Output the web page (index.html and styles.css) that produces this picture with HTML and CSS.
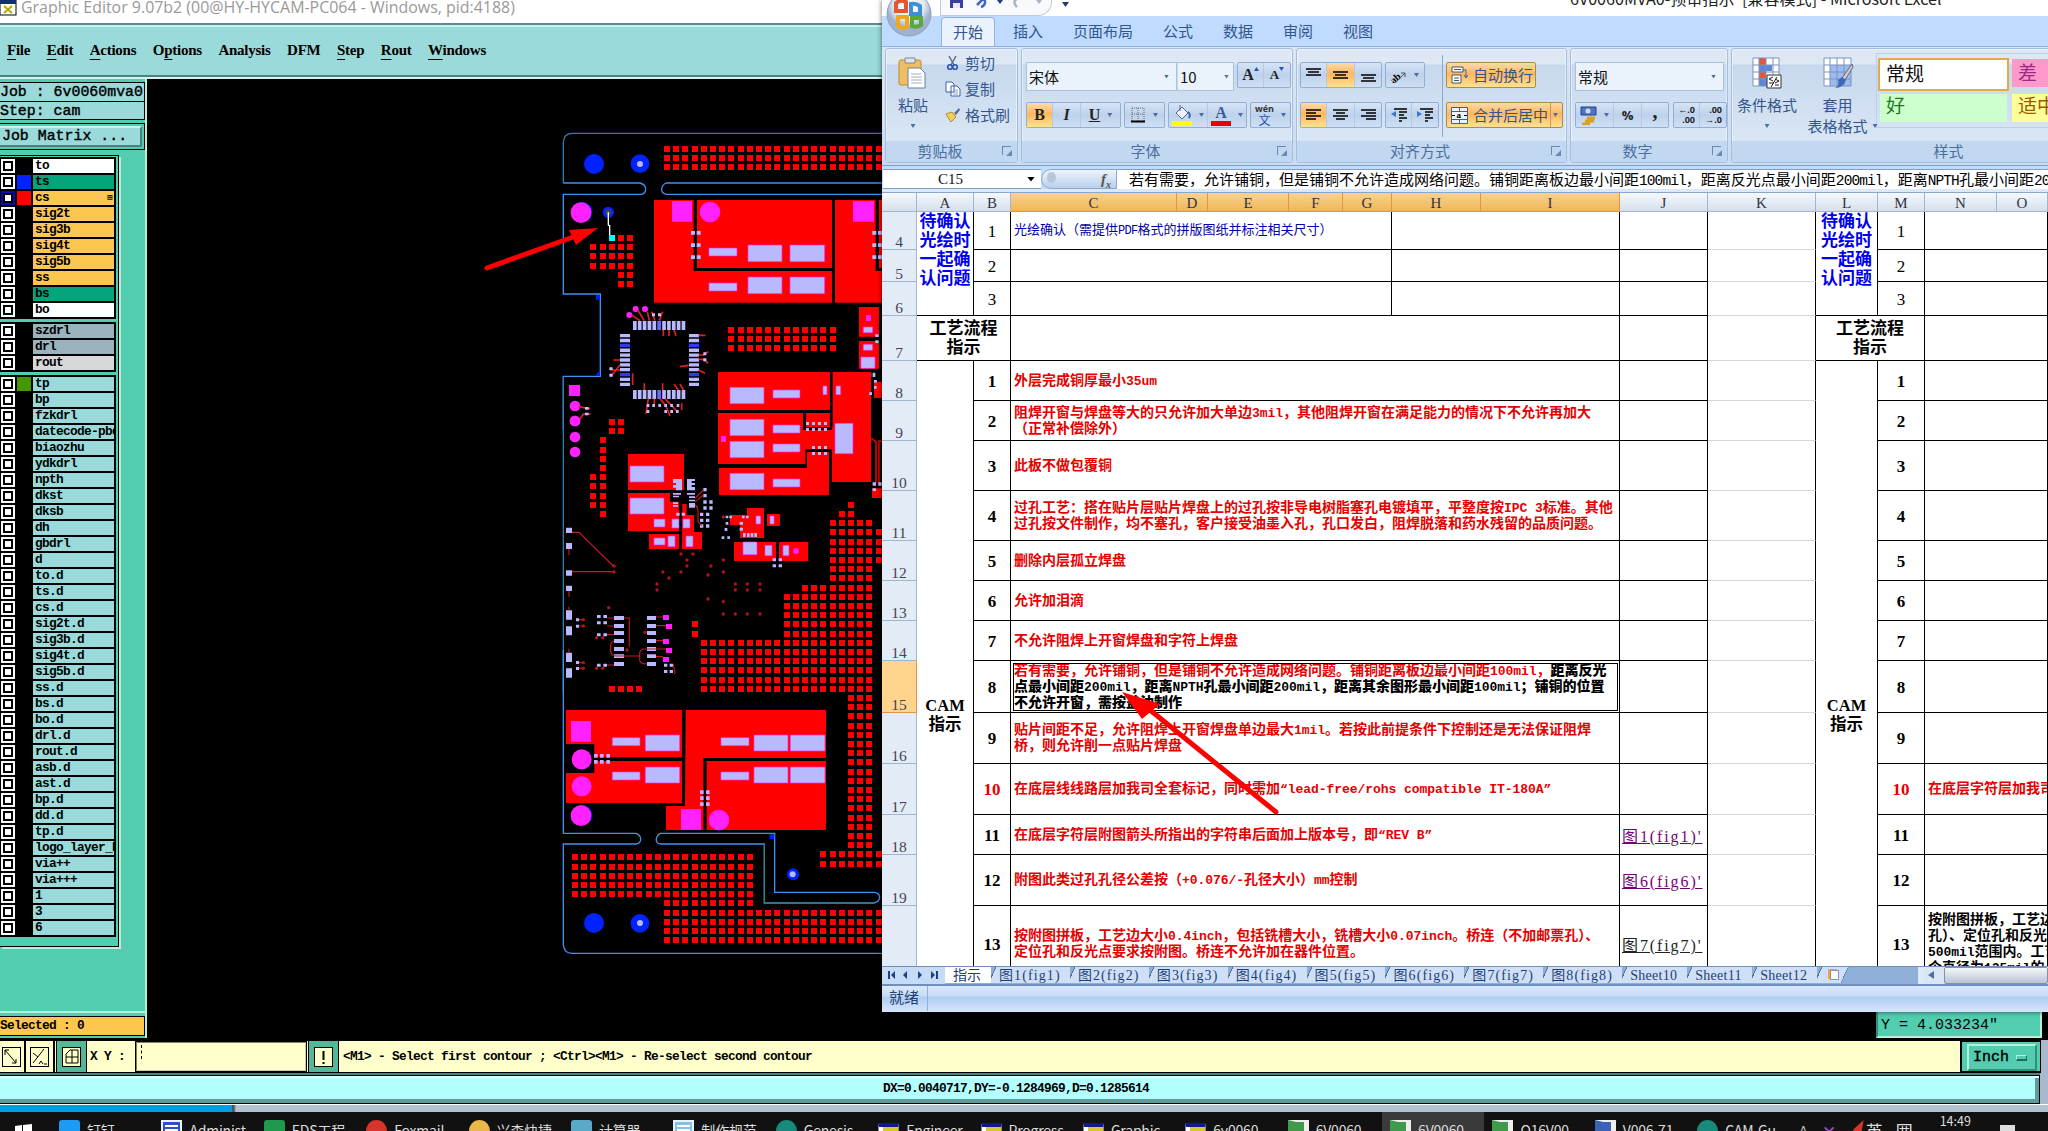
FILE: index.html
```html
<!DOCTYPE html>
<html lang="zh-CN">
<head>
<meta charset="UTF-8">
<title>Graphic Editor</title>
<link rel="stylesheet" href="styles.css">
</head>
<body>
<div class="editor">
  <div class="editor-title">
    <svg width="17" height="16" viewBox="0 0 17 16"><rect x="0" y="0" width="16" height="15" fill="#fff" stroke="#000"/><rect x="0" y="0" width="16" height="4" fill="#123078"/><path d="M4 6l8 7M12 6l-8 7" stroke="#b9a800" stroke-width="2"/></svg>
    <span>Graphic Editor 9.07b2 (00@HY-HYCAM-PC064 - Windows, pid:4188)</span>
  </div>
  <div class="menubar">
    <span><u>F</u>ile</span><span><u>E</u>dit</span><span><u>A</u>ctions</span><span>O<u>p</u>tions</span><span>Analysis</span><span>DFM</span><span><u>S</u>tep</span><span><u>R</u>out</span><span><u>W</u>indows</span>
  </div>
  <div class="work">
    <div class="side">
      <div class="job">
        <div class="job-line">Job : 6v0060mva0</div>
        <div class="job-line">Step: cam</div>
      </div>
      <div class="matrix"><div class="matrix-btn">Job Matrix ...</div></div>
      <div class="layers" id="layers"></div>
      <div class="fill"></div>
      <div class="selected">Selected : 0</div>
    </div>
    <div class="canvas">
      <svg class="board" width="735" height="961" viewBox="147 79 735 961">
        <g id="copper" fill="#f00"></g>
        <!-- upper part -->
        <g transform="translate(540 110) scale(.3333)">
          <g fill="none" stroke="#3f93f0" stroke-width="4">
            <path d="M70 219V98Q70 70 98 70H1026" stroke="#2d7fae"/>
            <path d="M70 219H300Q317 224 317 237T305 253H70V552H181V799H70V960"/>
            <path d="M1026 219H378Q366 225 365 237T378 253H1026"/>
          </g>
          <path d="M168 555h12v14h-12zM166 797h14v-18z" fill="#02f"/>
          <g fill="#02f"><circle cx="162" cy="162" r="30"/><circle cx="300" cy="161" r="28"/><circle cx="205" cy="307" r="17"/><circle cx="127" cy="306" r="30"/></g>
          <circle cx="300" cy="162" r="9" fill="#b9b9ff"/>
          <circle cx="205" cy="307" r="9" fill="#444"/>
          <path d="M205 307V345L209 347V380" fill="none" stroke="#fff" stroke-width="4"/>
          <rect x="207" y="375" width="18" height="18" fill="#0ff"/>
          <g fill="#f00">
            <path d="M342 270H461V483H876V578H342zM471 270H876V474H471zM885 270H1007V483H1026V578H885zM1017 270h10v204h-10z"/>
            <path d="M957 591H1017V680H957zM957 693H1017V776H957z"/>
            <path d="M1003 820h24v44h-24z"/>
          </g>
          <g fill="#f2f"><circle cx="123" cy="308" r="31"/><path d="M396 273h60v62h-60zM939 273h63v62h-63zM978 615h15v18h-15z"/><circle cx="510" cy="306" r="31"/>
            <circle cx="287" cy="597" r="9"/><circle cx="315" cy="597" r="9"/><circle cx="268" cy="615" r="9"/>
            <path d="M87 825h33v33H87z"/><circle cx="105" cy="888" r="16"/><circle cx="105" cy="933" r="16"/></g>
          <g fill="#b9b9ff" stroke="#f2f" stroke-width="2">
            <path d="M507 414h84v24h-84zM624 405h102v50H624zM750 405h104v50H750zM507 519h84v24h-84zM624 501h102v50H624zM750 501h104v50H750z"/>
            <path d="M970 651h28v17h-28zM970 703h28v18h-28zM963 741h42v34h-42z"/>
          </g>
          <g fill="#b9b9ff">
            <path d="M453 363h12v11h-12zM470 363h12v11h-12zM453 400h12v11h-12zM470 400h12v11h-12zM453 436h12v11h-12zM470 436h12v11h-12zM997 363h12v11h-12zM1014 363h12v11h-12zM997 400h12v11h-12zM1014 400h12v11h-12zM997 436h12v11h-12zM1014 436h12v11h-12z"/>
            <path d="M963 788h8v13h-8zM975 788h8v13h-8zM986 788h8v13h-8zM998 788h8v13h-8zM1006 673h10v8h-10zM1006 691h10v8h-10zM1002 810h8v8h-8zM1002 828h8v8h-8zM988 847h8v8h-8z"/>
          </g>
          <g id="qfp"></g>
          <g fill="none" stroke="#d22" stroke-width="5">
            <path d="M275 615L300 632M293 600L313 632M322 605L328 632M335 605L345 632M368 605L358 632M370 660V678M387 660V678M402 660L408 678M476 676H496M476 735H490L505 725M476 748H490L505 760M476 780L495 790M240 750H220M240 765L212 800M240 780H215M278 790V825M420 770L446 766M313 820V840M368 820V840M402 822L415 840M420 822L430 840M325 866L318 912M343 866V885M360 866L378 888L390 918M375 866L398 890L412 905M425 880V900"/>
            <path d="M115 890L150 896M118 930L130 912H152"/>
          </g>
          <g fill="#c9b9ff"><path d="M336 610h9v9h-9zM354 610h9v9h-9zM490 727h9v9h-9zM490 745h9v9h-9zM208 772h10v9h-10zM208 791h10v9h-10zM320 882h8v9h-8zM337 882h8v9h-8zM355 882h8v9h-8zM373 882h8v9h-8zM391 882h8v9h-8zM410 882h8v9h-8zM320 900h8v9h-8zM373 900h8v9h-8zM391 900h8v9h-8zM408 900h8v9h-8zM135 891h11v8h-11zM135 908h11v8h-11z"/></g>
        </g>
        <!-- middle part -->
        <g transform="translate(540 360) scale(.3333)">
          <path d="M70 50V1000" stroke="#2d7fae" stroke-width="4"/>
          <g fill="#f00">
            <path d="M534 36H870V202H798V150H534zM534 159H789V210H876V36H993V366H876V268H796V312H534zM537 324H801V276H867V405H537z"/>
            <path d="M264 282H432V390H264zM264 399H390V425H417V514H264zM427 432H440V465H462V516H486V567H426zM327 522H417V567H327z"/>
            <path d="M621 444H672V534H600V495H570V465H621zM681 462H720V498H681zM582 546H708V603H582zM717 546H804V603H717z"/>
            <path d="M996 385H1026V414H996zM1002 65h24v48h-24z"/>
          </g>
          <path d="M870 36h8v166h-8zM789 150h81v9h-75v40h-6z" fill="#000"/>
          <path d="M994 235L1008 245V370M1026 243H1017V370" fill="none" stroke="#d00" stroke-width="5"/>
          <g fill="#f2f"><circle cx="105" cy="231" r="16"/><circle cx="105" cy="276" r="16"/><circle cx="105" cy="183" r="16"/><circle cx="768" cy="573" r="9"/>
            <path d="M543 228h15v18h-15zM369 765h18v15h-18zM378 792h18v15h-18zM369 837h18v15h-18zM378 864h18v15h-18zM369 891h18v15h-18z"/></g>
          <g fill="#b9b9ff" stroke="#f2f" stroke-width="2">
            <path d="M570 82h102v49H570zM570 178h102v49H570zM570 244h102v49H570zM570 340h102v49H570zM699 90h81v24h-81zM699 195h81v24h-81zM699 252h81v24h-81zM699 357h81v24h-81zM849 78h12v26h-12zM888 78h14v26h-14zM885 190h54v91h-54z"/>
            <path d="M270 318h102v48H270zM270 414h102v48H270zM342 477h33v24h-33zM396 477h21v27h-21zM429 477h21v27h-21zM342 534h33v21h-33zM384 528h21v32h-21zM438 528h21v32h-21z"/>
            <path d="M648 468h14v24h-14zM690 468h12v24h-12zM609 546h42v38h-42zM675 556h21v31h-21zM729 556h18v31h-18z"/>
          </g>
          <g fill="#b9b9ff">
            <path d="M798 186h9v9h-9zM816 186h9v9h-9zM834 186h9v9h-9zM852 186h9v9h-9zM798 204h9v9h-9zM816 204h9v9h-9zM834 204h9v9h-9zM852 204h9v9h-9zM816 258h9v9h-9zM834 258h9v9h-9zM852 258h9v9h-9zM816 276h9v9h-9zM834 276h9v9h-9zM852 276h9v9h-9z"/>
            <path d="M399 357h27v34h-18v-8h-9v-8h9v-6h-9zM441 357h24v6h-10v6h10v6h-10v6h10v10h-24zM399 399h24v5h-24zM399 407h18v5h-18zM399 427h15v5h-15zM399 435h15v5h-15zM441 399h24v5h-24zM447 409h18v5h-18zM447 419h18v5h-18zM447 429h18v14h-18z"/>
            <path d="M490 384h10v10h-10zM490 402h10v10h-10zM490 421h10v10h-10zM508 421h10v10h-10zM490 439h10v10h-10zM508 439h10v10h-10zM480 458h10v10h-10zM498 458h10v10h-10zM480 476h10v10h-10zM498 476h10v10h-10zM480 493h10v10h-10zM498 493h10v10h-10zM409 458h10v9h-10zM425 458h10v9h-10z"/>
            <path d="M557 467h8v8h-8zM568 467h8v8h-8zM606 467h8v8h-8zM618 467h8v8h-8zM557 486h8v8h-8zM599 486h10v8h-10zM554 504h8v9h-8zM599 503h10v9h-10zM545 529h8v8h-8zM562 529h8v8h-8zM609 519h8v12h-8zM621 519h8v12h-8zM632 519h8v12h-8zM643 519h8v12h-8zM698 595h10v9h-10zM716 595h10v9h-10zM698 613h10v9h-10zM716 613h10v9h-10zM998 367h10v10h-10zM1015 367h10v10h-10zM998 385h10v8h-10zM1002 60h8v8h-8zM1002 78h8v8h-8zM988 97h8v8h-8z"/>
            <path d="M78 503h18v16H78zM78 549h18v18H78zM78 631h18v16H78zM78 677h18v16H78zM78 751h18v28H78zM78 799h18v27H78zM78 878h18v28H78zM78 925h18v28H78z"/>
            <path d="M222 768h30v12h-30zM222 792h30v12h-30zM222 813h30v12h-30zM222 837h30v12h-30zM222 861h30v12h-30zM222 883h30v11h-30zM222 906h30v12h-30zM321 768h27v12h-27zM321 792h27v12h-27zM321 813h27v12h-27zM321 837h27v12h-27zM321 861h27v12h-27zM321 883h27v11h-27zM321 906h27v12h-27z"/>
            <path d="M171 765h11v9h-11zM190 765h11v9h-11zM171 784h11v9h-11zM190 784h11v9h-11zM171 820h11v9h-11zM190 820h11v9h-11zM171 911h11v9h-11zM190 911h11v9h-11zM108 775h9v9h-9zM108 794h9v9h-9zM108 903h9v9h-9zM108 921h9v9h-9zM372 911h10v9h-10zM389 911h10v9h-10zM372 930h10v9h-10zM389 930h10v9h-10z"/>
          </g>
          <g fill="none" stroke="#c21b1b" stroke-width="3.500">
            <path d="M96 517H117L220 618M96 635H222M252 774H268V860M222 843Q212 845 212 858V876Q214 888 228 888H299M348 867H310Q299 870 299 880V900Q300 912 321 912M87 567V585M87 693V711M87 740V751M87 866V878M117 779H135M117 798H135M117 908H135M117 925H135M201 774H222M201 798H222M201 824H222M201 915H222M348 771H369M348 797H378M348 842H369M348 867H378M348 890H369M465 415L490 390M465 425L490 405M465 435Q475 440 474 460V485L485 497M400 912L405 942"/>
          </g>
          <g id="vias" fill="#b01414"></g>
        </g>
        <!-- lower part -->
        <g transform="translate(540 670) scale(.3333)">
          <g fill="#f00">
            <path d="M78 120H426V262H163V222H78zM78 309H163V273H426V399H78z"/>
            <path d="M437 120H858V264H490V480H378V408H435zM500 273H858V480H500z"/>
          </g>
          <g fill="none" stroke="#3f93f0" stroke-width="4">
            <path d="M70 -60V490H288Q302 495 302 508T288 522H70V825Q73 850 96 850H1026" />
            <path d="M704 490H362Q350 495 349 508T362 522H673V699H1003Q1019 695 1019 682T1003 667H704z"/>
          </g>
          <path d="M673 522V699H1003" fill="none" stroke="#2f7d6a" stroke-width="3"/>
          <g fill="#02f"><circle cx="162" cy="759" r="30"/><circle cx="300" cy="760" r="28"/><circle cx="759" cy="613" r="18"/><circle cx="127" cy="435" r="30"/><path d="M689 493h14v14h-14z"/></g>
          <g fill="#b9b9ff"><circle cx="300" cy="759" r="9"/><circle cx="758" cy="613" r="9"/></g>
          <g fill="#f2f"><path d="M93 153h60v62H93zM423 417h60v62h-60z"/><circle cx="125" cy="268" r="30"/><circle cx="125" cy="349" r="30"/><circle cx="123" cy="437" r="31"/><circle cx="537" cy="450" r="31"/></g>
          <g fill="#b9b9ff" stroke="#f2f" stroke-width="2">
            <path d="M217 203h83v24h-83zM316 195h103v48H316zM217 306h83v24h-83zM316 291h103v48H316zM543 203h84v24h-84zM642 195h102v48H642zM751 195h104v48H751zM543 306h84v24h-84zM642 291h102v48H642zM751 291h104v48H751z"/>
          </g>
          <path fill="#c9a9ff" d="M162 252h11v11h-11zM180 252h11v11h-11zM199 252h11v11h-11zM162 270h11v11h-11zM180 270h11v11h-11zM199 270h11v11h-11zM480 361h11v11h-11zM498 361h11v11h-11zM480 379h11v11h-11zM498 379h11v11h-11zM480 397h11v11h-11zM498 397h11v11h-11z"/>
        </g>
        <path d="M487 268L576 236" stroke="#f00" stroke-width="5" stroke-linecap="round"/>
        <path d="M598 228L569 230L576 245z" fill="#f00"/>
      </svg>
      <div class="readout"><div>X = -0.168968</div><div>Y = 4.033234"</div></div>
    </div>
  </div>
  <div class="cmdbar">
    <div class="tool"><svg width="20" height="24" viewBox="0 0 20 24"><rect x=".5" y="2.5" width="18" height="19"/><path d="M3 5L14 18M3 10V5h4M10 18h4v-4"/></svg></div>
    <div class="tool"><svg width="20" height="24" viewBox="0 0 20 24"><rect x=".5" y="2.5" width="18" height="19"/><path d="M3 18L14 4M3 8L8 12M9 19L11 16L13 19M14 19h3"/></svg></div>
    <div class="tool on"><svg width="20" height="24" viewBox="0 0 20 24"><rect x=".5" y="2.5" width="18" height="19"/><path d="M4 9L8 5H16V18H4zM4 12H16M10 5V18"/></svg></div>
    <span class="xy">X Y :</span>
    <div class="xy-input"><i></i></div>
    <div class="tool on"><svg width="20" height="24" viewBox="0 0 20 24"><rect x=".5" y="2.5" width="18" height="19"/><path d="M9.5 6V15M9.5 17V19" stroke-width="2"/></svg></div>
    <span class="hint">&lt;M1&gt; - Select first contour ; &lt;Ctrl&gt;&lt;M1&gt; - Re-select second contour</span>
    <div class="inch"><div>Inch<i></i></div></div>
  </div>
  <div class="measure"><span>DX=0.0040717,DY=-0.1284969,D=0.1285614</span></div>
  <div class="strip"></div>
</div>

<div class="taskbar" id="taskbar"></div>

<div class="excel">
  <div class="xl-title">
    <div class="qat">
      <svg width="110" height="14" viewBox="0 0 110 14"><path d="M9-4h13v12H9z" fill="#3a3fa0"/><path d="M12 3h7v5h-7z" fill="#e8e8ff"/><path d="M36 5L43-2Q46 5 40 7" fill="none" stroke="#3b66c4" stroke-width="2.5"/><path d="M56 0h6l-3 4z" fill="#1d3d80"/><path d="M78-3Q70 2 76 7" fill="none" stroke="#a9b3c4" stroke-width="2.5"/><path d="M95 0h6l-3 4z" fill="#a9b3c4"/></svg>
    </div>
    <span class="qat-more"></span>
    <span class="xl-name">6V0060MVA0-预审指示&nbsp; [兼容模式] - Microsoft Excel</span>
  </div>
  <div class="orb"><svg width="46" height="46" viewBox="0 0 46 46"><defs><radialGradient id="orb" cy=".3"><stop offset="0" stop-color="#fff"/><stop offset=".7" stop-color="#e3e8f0"/><stop offset="1" stop-color="#9fb2cd"/></radialGradient></defs><circle cx="23" cy="16" r="22" fill="url(#orb)" stroke="#8ba0c2"/><g fill="none" stroke-width="4"><path d="M10 5q5-4 10-1v9h-10z" stroke="#e4572e"/><path d="M25 6q5-1 9 2v8h-9z" stroke="#3c8fd6"/><path d="M12 19h9v10q-5 2-9-1z" stroke="#f2a71b"/><path d="M26 20h9v7q-5 3-9 1z" stroke="#5aa83a"/></g></svg></div>
  <div class="tabs">
    <span class="active">开始</span><span>插入</span><span>页面布局</span><span>公式</span><span>数据</span><span>审阅</span><span>视图</span>
  </div>
  <div class="ribbon">
    <div class="group g-clip">
      <div class="body">
        <div class="big">
          <svg width="32" height="34" viewBox="0 0 32 34"><rect x="2" y="4" width="22" height="25" rx="2" fill="#f0be62" stroke="#c08a30"/><path d="M8 2h10v5H8z" fill="#dfe4ea" stroke="#7d8896"/><path d="M11 12h12l5 5v15H11z" fill="#fff" stroke="#6b7f9e"/><path d="M14 18h10M14 21h11M14 24h11M14 27h11" stroke="#9fb0c8"/></svg>
          <span>粘贴</span><i class="dn"></i>
        </div>
        <div class="list">
          <div><svg width="16" height="16" viewBox="0 0 16 16"><path d="M4 1l5 9M11 1L6 10" stroke="#5b6c86" stroke-width="1.5"/><circle cx="5" cy="12" r="2.3" fill="none" stroke="#2a56b0" stroke-width="1.6"/><circle cx="10" cy="12" r="2.3" fill="none" stroke="#2a56b0" stroke-width="1.6"/></svg>剪切</div>
          <div><svg width="16" height="16" viewBox="0 0 16 16"><path d="M1 1h6l2 2v8H1zM6 5h6l3 3v7H6z" fill="#fff" stroke="#3b62a8"/><path d="M8 9h5M8 11h5M8 13h5" stroke="#86a3d6"/></svg>复制</div>
          <div><svg width="16" height="16" viewBox="0 0 16 16"><path d="M9 6L14 1l1 2-4 5z" fill="#5b6c96"/><path d="M1 7l6-2 4 5-5 5z" fill="#f3cf62" stroke="#b58b22"/></svg>格式刷</div>
        </div>
      </div>
      <div class="foot">剪贴板<b></b></div>
    </div>
    <div class="group g-font">
      <div class="body col">
        <div class="row"><div class="combo w150">宋体<i class="dn"></i></div><div class="combo w58">10<i class="dn"></i></div><div class="btns push3"><span class="w26 ser">A<sup><svg width="5" height="4" viewBox="0 0 5 4"><path d="M0 4h5L2.500 0z" fill="#2a56b0"/></svg></sup></span><span class="w26 ser sm">A<sup><svg width="5" height="4" viewBox="0 0 5 4"><path d="M0 0h5L2.500 4z" fill="#2a56b0"/></svg></sup></span></div></div>
        <div class="row">
          <div class="btns"><span class="w26 on ser">B</span><span class="w28 ser it">I</span><span class="w40 ser un"><u>U</u><i class="dn"></i></span></div>
          <div class="btns push3"><span class="w40"><svg width="15" height="16" viewBox="0 0 15 16"><path d="M1 1h12v13M1 1v13M7 1v13M1 7h12" fill="none" stroke="#566" stroke-dasharray="1 1"/><path d="M0 14.5h14" stroke="#000" stroke-width="2"/></svg><i class="dn"></i></span></div>
          <div class="btns push3"><span class="w40"><svg width="20" height="22" viewBox="0 0 20 22"><path d="M4 9l6-6 6 6-6 6z" fill="#eef3fb" stroke="#50688f"/><path d="M8 7V1" stroke="#50688f"/><path d="M16 8q3 2 1 6" stroke="#3b62a8" stroke-width="2" fill="none"/><path d="M0 17h20v5H0z" fill="#ff0"/></svg><i class="dn"></i></span><span class="w38"><em class="fc">A</em><i class="dn"></i></span></div>
          <div class="btns push3"><span class="w40"><em class="wen"><small>wén</small>文</em><i class="dn"></i></span></div>
        </div>
      </div>
      <div class="foot">字体<b></b></div>
    </div>
    <div class="group g-align">
      <div class="body">
        <div class="col2">
          <div class="row">
            <div class="btns"><span class="w26"><svg class="ln" width="15" height="14"><path d="M0 1h15M2 4h11M0 7h15"/></svg></span><span class="w28 on"><svg class="ln" width="15" height="12"><path d="M0 3h15M2 6h11M0 9h15"/></svg></span><span class="w26"><svg class="ln" width="15" height="14"><path d="M0 7h15M2 10h11M0 13h15"/></svg></span></div>
            <div class="btns push3"><span class="w38"><svg width="16" height="16" viewBox="0 0 16 16"><text x="-2" y="13" font-size="10" font-weight="bold" font-family="Liberation Serif" transform="rotate(-40 6 9)">ab</text><path d="M5 15L14 6m-4 0h4v4" fill="none" stroke="#555"/></svg><i class="dn"></i></span></div>
          </div>
          <div class="row">
            <div class="btns"><span class="w26 on"><svg class="ln" width="15" height="13"><path d="M0 1h15M0 4h10M0 7h15M0 10h10"/></svg></span><span class="w28"><svg class="ln" width="15" height="13"><path d="M0 1h15M3 4h9M0 7h15M3 10h9"/></svg></span><span class="w26"><svg class="ln" width="15" height="13"><path d="M0 1h15M5 4h10M0 7h15M5 10h10"/></svg></span></div>
            <div class="btns push3"><span class="w26"><svg class="ln" width="16" height="15"><path d="M3 1h13M8 4h8M8 7h5M8 10h8M8 13h3"/><path d="M5 3v6L0 6z" class="ar"/></svg></span><span class="w26"><svg class="ln" width="16" height="15"><path d="M3 1h13M8 4h8M8 7h5M8 10h8M8 13h3"/><path d="M0 3v6l5-3z" class="ar"/></svg></span></div>
          </div>
        </div>
        <div class="vsep"></div>
        <div class="col2">
          <div class="row"><div class="wide on w90"><svg width="17" height="18" viewBox="0 0 17 18"><path d="M1 1h11v5H1zM1 9h9v8H1z" fill="#fff" stroke="#456"/><path d="M3 3.500h7M3 12h5M3 14.500h5" stroke="#456"/><path d="M12 4h3v7M13 9l2 3 2-3" fill="none" stroke="#3b62a8"/></svg>自动换行</div></div>
          <div class="row"><div class="wide on w117"><svg width="17" height="17" viewBox="0 0 17 17"><path d="M.5.5h16v16H.5zM.5 4.500h16M.5 12.500h16M8.500.5v4M8.500 12.500v4" fill="#eef4ff" stroke="#3f5f96"/><text x="5.500" y="11" font-size="9" font-weight="bold" font-family="Liberation Serif">a</text><path d="M1 8.500h3M13 8.500h3" stroke="#000"/></svg>合并后居中<s></s><i class="dn"></i></div></div>
        </div>
      </div>
      <div class="foot">对齐方式<b></b></div>
    </div>
    <div class="group g-num">
      <div class="body col">
        <div class="row"><div class="combo w149">常规<i class="dn"></i></div></div>
        <div class="row">
          <div class="btns"><span class="w38"><svg width="17" height="19" viewBox="0 0 17 19"><path d="M1 1h15v8H1z" fill="#4f74c4" stroke="#22408a"/><circle cx="8" cy="5" r="2.500" fill="#cfdcf6"/><path d="M7 12h8M5 15h9M2 18h8" stroke="#dba11f" stroke-width="3"/></svg><i class="dn"></i></span><span class="w28 pc">%</span><span class="w26 cm">,</span></div>
          <div class="btns push4"><span class="w26 dec">←.0<br>.00</span><span class="w26 dec">.00<br>→.0</span></div>
        </div>
      </div>
      <div class="foot">数字<b></b></div>
    </div>
    <div class="group g-style">
      <div class="body">
        <div class="big b2">
          <svg width="32" height="34" viewBox="0 0 32 34"><path d="M2 2h26v28H2z" fill="#fff"/><path d="M8 2h7v28H8z" fill="#e5573c"/><path d="M8 9h13v6H8zM8 22h9v8H8z" fill="#5f86d9"/><path d="M2 2h26v28H2zM2 9h26M2 16h26M2 23h26M8 2v28M15 2v28M22 2v28" fill="none" stroke="#7a93bd"/><path d="M16 19h14v13H16z" fill="#fff" stroke="#333"/><path d="M22 21l-4 2 4 2M18 27h5M24 23l4 2-4 2M24 29h4M20 31l6-10" fill="none" stroke="#222"/></svg>
          <span>条件格式</span><i class="dn"></i>
        </div>
        <div class="big b3">
          <svg width="32" height="34" viewBox="0 0 32 34"><path d="M2 2h27v28H2z" fill="#fff"/><path d="M8 9h21v21H8z" fill="#9dbbee"/><path d="M2 2h27v28H2zM2 9h27M2 16h27M2 23h27M8 2v28M15 2v28M22 2v28" fill="none" stroke="#7a93bd"/><path d="M30 8L20 22l3 2 8-13z" fill="#c9cdd6" stroke="#667"/><path d="M20 21l4 3q-3 8-11 8 5-3 3-8z" fill="#3e67bb"/></svg>
          <span>套用</span><span class="l2">表格格式<i class="dn"></i></span>
        </div>
        <div class="gallery"><span class="s1">常规</span><span class="s2">差</span><span class="s3">好</span><span class="s4">适中</span></div>
      </div>
      <div class="foot">样式</div>
    </div>
  </div>
  <div class="formula">
    <div class="namebox"><span>C15</span><i></i></div>
    <div class="fx"><i></i><em>f<sub>x</sub></em></div>
    <div class="ftext">若有需要，允许铺铜，但是铺铜不允许造成网络问题。铺铜距离板边最小间距<span>100mil</span>，距离反光点最小间距<span>200mil</span>，距离<span>NPTH</span>孔最小间距<span>200mil</span></div>
  </div>
  <div class="sheet" id="sheet"></div>
  <div class="sheet-tabs">
    <div class="nav"><svg width="58" height="12" viewBox="0 0 58 12" fill="#1c3f86"><path d="M1 2h2v8H1zM8 2v8L4 6zM20 2v8l-4-4zM31 2l4 4-4 4zM44 2l4 4-4 4zM49 2h2v8h-2z"/></svg></div>
    <div class="names" id="names"></div>
    <div class="hscroll"><span class="arrow"></span><span class="thumb"></span></div>
  </div>
  <div class="xl-status"><span>就绪</span></div>
</div>

<svg class="pointer" width="160" height="126" viewBox="1120 690 160 126"><path d="M1276 812L1150 710" stroke="#f00" stroke-width="5" stroke-linecap="round"/><path d="M1122 692L1160 704L1142 719z" fill="#f00"/></svg>

<script src="script.js"></script>
</body>
</html>
```
FILE: styles.css
```css
*, ::before, ::after { box-sizing: border-box; }

body {
  margin: 0;
  width: 2048px;
  height: 1131px;
  overflow: hidden;
  position: relative;
  background: #a9b8cc;
  font-family: "Noto Sans CJK SC", sans-serif;
}

i, em { font-style: normal; }

/* ---------- graphic editor ---------- */
.editor { width: 2048px; height: 1112px; display: flex; flex-direction: column; }

.editor-title {
  height: 23px;
  background: #fff;
  color: #999;
  font: 15.95px/15px "Open Sans", sans-serif;
  display: flex;
  gap: 4px;
  white-space: nowrap;
}

.menubar {
  height: 56px;
  background: #9adada;
  border-top: 2px solid #5b8a8a;
  border-bottom: 2px solid #d6f5f2;
  box-shadow: inset 0 2px #c8f2ef, inset 0 -2px #4d8080;
  display: flex;
  gap: 16.5px;
  padding: 15px 0 0 7px;
  font: bold 15px/20px "Liberation Serif", serif;
  letter-spacing: -0.25px;
}
.menubar u { text-underline-offset: 4px; text-decoration-thickness: 1px; }

.work { height: 961px; display: flex; background: #000; }

.side {
  width: 147px;
  height: 959px;
  background: #52cdb0;
  border-right: 2px solid #b5f0df;
  display: flex;
  flex-direction: column;
  font-family: "Liberation Mono", monospace;
  color: #000;
}
.job { margin-top: 3px; width: 145px; border: 1px solid #000; border-left: 0; background: #000; }
.job-line, .matrix-btn { background: #9adada; font-size: 14.9px; line-height: 18px; white-space: pre; -webkit-text-stroke: .4px #000; }
.job-line { height: 18px; }
.job-line + .job-line { margin-top: 1px; height: 17px; }
.matrix { margin-top: 3px; width: 145px; height: 27px; border: 1px solid #000; border-left: 0; padding: 2px 2px 2px 0; }
.matrix-btn { height: 21px; border: 2px solid #4d8080; border-left: 0; border-top-color: #c8f2ef; padding-left: 2px; line-height: 16px; }
.layers {
  margin-top: 5px;
  width: 119px;
  height: 792px;
  padding: 1px 2px 0 0;
  border: 1px solid #000;
  border-left: 0;
  box-shadow: 2px 2px #b5f0df;
}
.lgroup { background: #000; padding: 2px 2px 0 1px; width: 116px; margin-bottom: 3px; }
.layer { display: flex; gap: 2px; height: 16px; }
.box { width: 14px; height: 14px; background: #fff; padding: 2px; }
.box::before { content: ""; display: block; width: 10px; height: 10px; border: 2px solid #000; background: #fff; }
.box.cur { background: #0a0ab0; }
.sw { width: 14px; height: 14px; }
.nm { width: 81px; height: 14px; overflow: hidden; padding-left: 2px; font-size: 12.8px; letter-spacing: -.68px; line-height: 14px; font-weight: bold; white-space: nowrap; background: #9adada; display: flex; justify-content: space-between; }
.nm small { font-size: 9px; padding-right: 2px; }
.fill { flex: 1; border-bottom: 2px solid #b5f0df; margin-bottom: 3px; }
.selected { height: 20px; width: 145px; border: 1px solid #000; border-left: 0; background: #fdc64f; font: bold 12.8px/17px "Liberation Mono", monospace; letter-spacing: -.68px; margin-bottom: 2px; white-space: nowrap; }

.canvas { flex: 1; position: relative; background: #000; display: flex; }
.readout {
  position: absolute;
  right: 6px;
  bottom: 2px;
  width: 166px;
  height: 46px;
  background: #52cdb0;
  border: 2px solid #2f8f78;
  border-bottom-color: #b5f0df;
  border-right-color: #b5f0df;
  padding: 3px 3px;
  font: 15px/19px "Liberation Mono", monospace;
}

.cmdbar { height: 33px; background: #ffc; display: flex; align-items: stretch; border-top: 1px solid #000; border-bottom: 1px solid #000; width: 2041px; }
.tool { width: 29px; border-right: 2px solid #000; display: flex; align-items: center; justify-content: center; }
.tool:first-child { width: 26px; }
.tool svg { fill: #ffc; stroke: #000; }
.tool.on { background: #52b898; border: 3px solid #52b898; box-shadow: 1px 0 #000, -1px 0 #000; width: 29px; margin-left: 2px; }
.xy, .hint { font: bold 12.8px/31px "Liberation Mono", monospace; letter-spacing: -.68px; }
.xy { width: 49px; padding-left: 4px; }
.xy-input { width: 172px; border: 2px solid #857c62; border-right-color: #cfc9a2; border-bottom-color: #cfc9a2; outline: 1px solid #000; outline-offset: -1px; padding: 2px 4px; }
.xy-input i { display: block; height: 14px; width: 2px; border-left: 1px dashed #000; }
.hint { flex: 1; padding-left: 5px; }
.inch { width: 81px; background: #52cdb0; border: 1px solid #000; border-left-width: 2px; padding: 2px 3px 2px 5px; }
.inch div { height: 27px; border: 2px solid #b5f0df; border-right-color: #2f8f78; border-bottom-color: #2f8f78; font: 15px/22px "Liberation Mono", monospace; -webkit-text-stroke: .4px #000; padding-left: 4px; display: flex; align-items: center; gap: 7px; }
.inch i { width: 11px; height: 6px; border: 1px solid #b5f0df; border-right-color: #1e6b59; border-bottom: 2px solid #1e6b59; }

.measure {
  width: 2040px;
  height: 29px;
  margin-top: 2px;
  border: 1px solid #000;
  border-left: 0;
  background: #b3ffff;
  box-shadow: inset 0 2px #dff, inset -4px -4px #5f9a9a, 0 -2px #4d8080;
  display: flex;
  justify-content: center;
  font: bold 12.8px/26px "Liberation Mono", monospace;
  letter-spacing: -.68px;
  padding-right: 7px;
}
.strip { flex: 1; background: linear-gradient(90deg, #049be0 232px, #555 232px, #555 234px, #b3c2d3 236px); border-top: 1px solid #fff; }

/* ---------- taskbar ---------- */
.taskbar { height: 19px; background: #111; display: flex; overflow: hidden; color: #ddd; font: 14px/20px "Noto Sans CJK SC", sans-serif; padding-top: 8px; }
.start { width: 59px; padding: 4px 0 0 15px; }
.task { width: 102.4px; display: flex; gap: 7px; flex: none; white-space: nowrap; letter-spacing: -0.2px; }
.task.act { background: #3a3a3a; margin-top: -8px; padding-top: 8px; box-shadow: -8px 0 #3a3a3a; width: 94px; margin-right: 8.4px; }
.task i { width: 21px; height: 22px; border-radius: 3px; flex: none; }
.task i.win { border-radius: 0; margin-top: 3px; background: #fff; border: 1px solid #888; border-top: 4px solid #101a8c; box-shadow: inset 4px 0 #fff, inset 9px 9px #d8c92a; }
.task i.doc { border-radius: 1px; border-left: 8px solid; border-right: 5px solid #eee; border-top: 2px solid #eee; }
.task i.page { border-radius: 0; border: 2px solid #e8f4fa; border-bottom: 0; }
.task i.page::before { content: ""; display: block; height: 2px; margin: 3px 2px; background: #fff; box-shadow: 0 4px #fff; }
.task i.disc { border-radius: 50%; }
.tray { display: flex; flex: 1; }
.tray span { font-size: 17px; line-height: 22px; }
.tray .up { width: 22px; font-size: 13px; }
.tray .ex { width: 26px; color: #a24bd0; }
.tray .fox { width: 16px; height: 22px; background: #d8352a; clip-path: polygon(100% 0, 75% 100%, 0 100%, 40% 40%); margin-right: 2px; }
.tray .ime { width: 30px; }
.tray .time { font-size: 12.5px; margin: -9px 26px 0 27px; width: 34px; line-height: 20px; }
.tray .note { width: 15px; height: 16px; background: #ddd; margin-top: 5px; }

/* ---------- excel ---------- */
.excel {
  position: absolute;
  left: 882px;
  top: 0;
  width: 1166px;
  height: 1012px;
  background: #bfdbff;
  box-shadow: 0 0 5px rgba(0, 0, 0, .6);
  display: flex;
  flex-direction: column;
  color: #33558c;
}
.xl-title { height: 16px; background: #fff; display: flex; }
.qat { width: 112px; height: 16px; margin-left: 58px; border: 1px solid #c4cad4; border-top: 0; border-radius: 0 0 14px 0; background: #f7f9fc; }
.qat svg { display: block; }
.qat-more { margin: 2px 0 0 10px; width: 7px; height: 5px; background: #223c78; clip-path: polygon(0 0, 100% 0, 50% 100%); }
.xl-name { margin: -13px 0 0 501px; font-size: 16.1px; line-height: 22px; color: #222; white-space: nowrap; height: 24px; }
.orb { position: absolute; left: 4px; top: -2px; height: 46px; }

.tabs { height: 30px; display: flex; padding-left: 59px; font-size: 15px; line-height: 30px; }
.tabs span { width: 60px; padding-left: 12px; white-space: nowrap; }
.tabs span:nth-child(3) { width: 90px; }
.tabs .active { width: 54px; margin-right: 6px; margin-top: 1px; line-height: 27px; background: #e9f2fd; border: 1px solid #8db2e3; border-bottom: 0; border-radius: 4px 4px 0 0; padding-left: 11px; }

.ribbon { height: 120px; background: linear-gradient(#dbe6f4, #cbdcf0); border-top: 1px solid #8db2e3; border-bottom: 1px solid #7f9fc9; display: flex; gap: 3px; padding: 1px 0 2px 3px; overflow: hidden; }
.group { flex: none; height: 115px; border: 1px solid #a3bfdf; border-radius: 3px; display: flex; flex-direction: column; background: linear-gradient(#dee8f5 0, #dee8f5 15px, #c7d8ed 16px, #d9e6f5 93px); box-shadow: inset 0 0 0 1px rgba(255,255,255,.45); }
.g-clip { width: 133px; }
.g-font { width: 272px; }
.g-align { width: 271px; }
.g-num { width: 158px; }
.g-style { width: 435px; }
.body { height: 92px; display: flex; }
.body.col { display: block; padding: 13px 0 0 4px; }
.col2 { padding-top: 13px; }
.foot { height: 21px; background: #c1d8f0; font-size: 15px; line-height: 19px; text-align: center; position: relative; color: #4c6f9f; padding-right: 23px; }
.g-style .foot { padding-right: 0; }
.foot b { position: absolute; right: 6px; top: 5px; width: 9px; height: 9px; border: 1px solid #6d89b3; border-right: 0; border-bottom: 0; }
.foot b::after { content: ""; position: absolute; right: -1px; bottom: -1px; border: 3px solid transparent; border-right-color: #6d89b3; border-bottom-color: #6d89b3; }
.row { display: flex; height: 26px; margin-bottom: 14px; align-items: flex-start; }
.big { width: 54px; padding-top: 7px; display: flex; flex-direction: column; align-items: center; font-size: 15px; line-height: 20px; white-space: nowrap; }
.big span { margin-top: 5px; }
.big .l2 { margin-top: 1px; display: flex; align-items: center; gap: 5px; padding-left: 10px; }
.dn { width: 5px; height: 4px; background: #4c6f9f; clip-path: polygon(0 0, 100% 0, 50% 100%); }
.big > .dn { margin-top: 9px; }
.b2 { width: 70px; }
.b3 { width: 71px; }
.list { padding: 1px 0 0 5px; font-size: 15px; line-height: 24px; white-space: nowrap; }
.list div { height: 26px; display: flex; align-items: center; gap: 4px; }
.combo { height: 29px; background: #eaf2fb; border: 1px solid #abc1de; font-size: 15px; line-height: 24px; color: #111; padding: 0 7px 0 2px; display: flex; justify-content: space-between; align-items: center; }
.combo + .combo { border-left-color: #c9d7ea; padding-right: 4px; }
.btns { display: flex; height: 26px; border: 1px solid #8fafd6; border-radius: 2px; background: linear-gradient(#d6e4f5, #bed2ec 50%, #cfdff4); }
.btns span { display: flex; align-items: center; justify-content: center; gap: 7px; height: 24px; border-right: 1px solid #b4c8e2; color: #222; }
.btns span:last-child { border-right: 0; }
.on, .btns .on { background: linear-gradient(#fbdbab, #fdb75f 45%, #ffe28e); }
.btns .ser { font: bold 16px "Liberation Serif", serif; }
.btns .ser.sm { font-size: 13px; }
.btns .w26.ser { gap: 0; }
.ser sup { line-height: 0; margin-top: -12px; }
.ser sup svg { display: block; }
.btns .ser.it { font-style: italic; }
.push3 { margin-left: 3px; }
.push4 { margin-left: 4px; }
.w26 { width: 26px; }
.w28 { width: 28px; }
.w38 { width: 38px; }
.w40 { width: 39px; }
.w58 { width: 57px; }
.w90 { width: 90px; }
.w117 { width: 117px; }
.w149 { width: 149px; }
.w150 { width: 151px; }
.fc { font: bold 16px/17px "Liberation Serif", serif; color: #3b5a9b; border-bottom: 5px solid #e00; width: 20px; text-align: center; }
.wen { font-size: 12px; line-height: 12px; display: flex; flex-direction: column; align-items: center; color: #2a4fb8; }
.wen small { font: bold 9px/10px "Open Sans", sans-serif; color: #333; }
.ln { fill: none; stroke: #000; stroke-width: 1.7; }
.ln .ar { fill: #3b75cc; stroke: none; }
.g-align .body { padding-left: 3px; }
.vsep { width: 1px; height: 82px; margin: 6px 3px 0 3px; background: #8ba7cc; }
.wide { height: 26px; border: 1px solid #b08a4c; border-radius: 2px; display: flex; align-items: center; gap: 5px; padding-left: 4px; font-size: 15px; line-height: 20px; white-space: nowrap; }
.wide s { width: 1px; height: 24px; background: #c99a52; margin: 0 -3px; }
.pc { font: bold 13px "Open Sans", sans-serif; }
.cm { font: bold 20px/10px "Liberation Serif", serif; padding-bottom: 8px; }
.btns .dec { display: block; font: bold 9px/10px "Open Sans", sans-serif; text-align: right; padding: 2px 4px 0 0; white-space: nowrap; }
.gallery { margin: 4px 0 0 3px; width: 260px; height: 75px; border: 1px solid #b9cfea; display: grid; grid-template-columns: 131px 120px; grid-template-rows: 36px 28px; column-gap: 3px; font-size: 19px; padding: 4px 1px; white-space: nowrap; }
.gallery span { padding-left: 6px; line-height: 25px; }
.gallery .s1 { background: #fff; color: #111; border: 2px solid #e3a94f; height: 33px; }
.gallery .s2 { background: #f9c; color: #9c2a84; height: 28px; margin-top: 1px; }
.gallery .s3 { background: #cfc; color: #1d7a1d; margin: 0 2px; line-height: 22px; }
.gallery .s4 { background: #ff9; color: #9c5a00; line-height: 22px; }

.formula { height: 27px; padding: 3px 0 0 1px; display: flex; border-bottom: 1px solid #8aa6cc; background: linear-gradient(#bfdbff 23px, #dce9f9 23px); }
.formula > div { height: 20px; }
.namebox { width: 158px; background: #fff; display: flex; align-items: center; font: 15px "Liberation Serif", serif; color: #111; justify-content: flex-end; border-top: 1px solid #7f9fc9; border-bottom: 1px solid #7f9fc9; padding-right: 6px; }
.namebox i { width: 8px; height: 5px; background: #000; clip-path: polygon(0 0, 100% 0, 50% 100%); margin-left: 64px; }
.fx { width: 76px; border: 1px solid #8ba7cc; border-radius: 10px 0 0 10px; background: linear-gradient(#eef4fc, #b9cfec); display: flex; justify-content: space-between; padding: 2px 5px; }
.fx i { width: 9px; height: 11px; border-radius: 50%; background: #b9c6da; }
.fx em { font: italic bold 15px/14px "Liberation Serif", serif; color: #555; }
.fx sub { font-size: 10px; }
.ftext { flex: 1; background: #fff; padding-left: 12px; font-size: 15px; line-height: 17px; color: #000; white-space: nowrap; overflow: hidden; border-top: 1px solid #7f9fc9; }
.ftext span { font: 14.5px/15px "Liberation Mono", monospace; letter-spacing: -.9px; }

/* worksheet */
.sheet {
  height: 773px;
  overflow: hidden;
  background: #fff;
  display: grid;
  grid-template-columns: 35px 57px 37px 166px 31px 81px 54px 49px 89px 139px 88px 108px 62px 47px 72px 51px;
  grid-template-rows: 19px 38px 32px 34px 45px 40px 40px 50px 50px 40px 40px 40px 52px 51px 51px 40px 51px 77px;
  font-family: "Liberation Serif", "Noto Sans CJK SC", serif;
  color: #000;
}
.sheet > div { min-width: 0; min-height: 0; overflow: hidden; display: flex; align-items: center; }
.hd { justify-content: center; background: linear-gradient(#f6f9fc, #d5dfec); border-right: 1px solid #9eb6ce; border-bottom: 1px solid #9eb6ce; font-size: 15px; color: #334; padding-top: 2px; }
.hd.sel { background: linear-gradient(#f9d294, #f1b755); border-color: #e39345; }
.sheet > .rh { background: #e3ebf6; border-right: 1px solid #9eb6ce; border-bottom: 1px solid #9eb6ce; justify-content: center; align-items: flex-end; font-size: 15.5px; line-height: 15px; color: #445; }
.sheet > .rh.sel { background: #ffd48c; border-color: #e39345; }
.sheet > .c { border-right: 1px solid #000; border-bottom: 1px solid #000; }
.sheet > .kk { border-right: 1px solid #000; border-bottom: 1px solid #d4d8dc; }
.cat { font-weight: bold; font-size: 17px; line-height: 19px; justify-content: center; text-align: center; }
.blue { color: #00e; }
.sheet > .cat.blue { align-items: flex-start; }
.cat.cam { font-size: 16.5px; padding-top: 87px; }
.n { justify-content: center; font-size: 17px; padding-top: 2px; }
.n.bold { font-weight: bold; }
.n.red, .t.red { color: #e60000; }
.t { font-weight: bold; font-size: 14px; line-height: 16px; padding-left: 3px; white-space: pre; }
.t.note { font-weight: normal; color: #00a; font-size: 13px; padding-bottom: 1px; }
.t b { color: #000; }
.lat { font: 13px/14px "Liberation Mono", monospace; font-weight: inherit; letter-spacing: -.05px; }
.note .lat { font-size: 12px; letter-spacing: -.7px; }
.sheet > .cell15 { outline: 1px solid #000; outline-offset: -3px; align-items: flex-start; padding-top: 2px; }
.sheet > .right.low { align-items: flex-start; padding-top: 6px; }
.link { font-size: 16px; letter-spacing: 1.9px; padding-left: 2px; color: #707; text-decoration: underline; white-space: nowrap; }
.link.new { color: #222; }

.sheet-tabs { height: 18px; background: #8fafd9; border-top: 1px solid #6f8fbf; display: flex; }
.nav { width: 63px; padding: 2px 0 0 5px; background: #c6dbf5; }
.nav svg { display: block; }
.names { width: 973px; display: flex; font: 14px/17px "Liberation Serif", "Noto Sans CJK SC", serif; color: #1f3f77; white-space: nowrap; }
.names span { width: 78.9px; padding-left: 8px; letter-spacing: 1.1px; background: linear-gradient(115deg, transparent 4px, #4e6fa0 4px, #4e6fa0 5px, #cfe0f6 5px); height: 16px; }
.names .act { background: #fff; width: 46px; padding-left: 8px; letter-spacing: 0; }
.names .sh { width: 65px; letter-spacing: .3px; padding-left: 8px; }
.names .new { width: 36px; background: linear-gradient(115deg, transparent 4px, #4e6fa0 4px, #4e6fa0 5px, #cfe0f6 5px, #cfe0f6 28px, #4e6fa0 28px, transparent 29px); }
.names .new::before { content: ""; display: block; width: 9px; height: 10px; margin: 3px 0 0 5px; background: #fff; border: 1px solid #8a93a8; box-shadow: -2px -1px #f0a52c; }
.hscroll { flex: 1; border-left: 6px solid #dce9f9; display: flex; background: #dbe6f5; }
.hscroll .arrow { width: 6px; height: 8px; margin: 4px 10px 0 4px; background: #4c6f9f; clip-path: polygon(100% 0, 100% 100%, 0 50%); }
.hscroll .thumb { flex: 1; border: 1px solid #8492a8; border-radius: 2px; background: linear-gradient(#f6f8fb, #b9c4d4); }
.xl-status { height: 28px; border-top: 2px solid #6f8fbf; background: linear-gradient(#dbe9fb 0, #c6dcf8 10px, #aecdf3 11px, #d3e4fa 25px); font-size: 15px; line-height: 21px; }
.xl-status span { display: block; width: 46px; height: 25px; padding-left: 7px; border-right: 1px solid #8fb0dd; color: #223f72; }

.pointer { position: absolute; left: 1120px; top: 690px; }
```
FILE: script.js
```js
// ---- layer list ----
const ORANGE = '#fdc64f', GREEN = '#04a57c', WHITE = '#ffffff', SLATE = '#9ab3bd', GREY = '#d8d8d8', CYAN = '#9adada';
const groups = [
  [['to', WHITE], ['ts', GREEN, '#0022ff'], ['cs', ORANGE, '#ff0000'], ['sig2t', ORANGE], ['sig3b', ORANGE], ['sig4t', ORANGE], ['sig5b', ORANGE], ['ss', ORANGE], ['bs', GREEN], ['bo', WHITE]],
  [['szdrl', SLATE], ['drl', SLATE], ['rout', GREY]],
  'tp bp fzkdrl datecode-pbd biaozhu ydkdrl npth dkst dksb dh gbdrl d to.d ts.d cs.d sig2t.d sig3b.d sig4t.d sig5b.d ss.d bs.d bo.d drl.d rout.d asb.d ast.d bp.d dd.d tp.d logo_layer_b via++ via+++ 1 3 6'
    .split(' ').map(n => [n, CYAN, n === 'tp' ? '#449900' : ''])
];
document.getElementById('layers').innerHTML = groups.map(g =>
  '<div class="lgroup">' + g.map(([name, bg, sw]) =>
    `<div class="layer"><span class="box${name === 'cs' ? ' cur' : ''}"></span><span class="sw" style="background:${sw || '#000'}"></span><span class="nm" style="background:${bg}">${name}${name === 'cs' ? '<small>⊞</small>' : ''}</span></div>`
  ).join('') + '</div>').join('');

// ---- copper dots: column range, row range, y origin ----
const P = 9.2;
const RAIL = 146, INNER = 235;
const dots = [
  [0, 23, 0, 2, RAIL], [-10, 9, 77, 81, RAIL], [0, 9, 82, 82, RAIL], [0, 23, 83, 86, RAIL],
  [-5, -4, 0, 0, INNER], [-8, -4, 1, 3, INNER], [-5, -4, 4, 5, INNER],
  [-6, -5, 20, 21, INNER], [-7, -7, 22, 30, INNER], [-8, -8, 26, 29, INNER], [7, 18, 10, 12, INNER],
  [20, 20, 29, 29, INNER], [19, 20, 30, 30, INNER], [18, 22, 31, 31, INNER], [18, 23, 32, 35, INNER],
  [18, 22, 36, 37, INNER], [15, 22, 38, 38, INNER], [13, 22, 39, 43, INNER], [3, 3, 42, 43, INNER],
  [4, 22, 44, 49, INNER], [-6, -3, 49, 49, INNER], [20, 22, 50, 66, INNER], [17, 23, 67, 68, INNER]
];
let d = '';
dots.forEach(([i0, i1, j0, j1, y0]) => {
  for (let i = i0; i <= i1; i++)
    for (let j = j0; j <= j1; j++)
      d += `M${Math.round(664 + i * P)} ${Math.round(y0 + j * P)}h6v6h-6z`;
});
document.getElementById('copper').innerHTML = `<path d="${d}"/>`;

// pads of the quad package
let pads = '';
for (let i = 0; i < 11; i++) {
  const fill = i === 5 ? '#6a6aff' : '#b9b9ff', x = 279 + i * 14.6, y = 672 + i * 14.6;
  pads += `<path fill="${fill}" d="M${x} 633h11v27h-11zM${x} 840h11v27h-11z"/>`;
  const side = (i === 2 || i === 8) ? '#2a3aff' : '#b9b9ff';
  pads += `<path fill="${side}" d="M240 ${y}h30v10h-30zM447 ${y}h30v10h-30z"/>`;
}
document.getElementById('qfp').innerHTML = pads;

const vias = [[423, 582], [459, 582], [441, 600], [441, 618], [423, 636], [369, 636], [387, 654], [351, 672], [351, 690], [504, 645], [513, 618], [504, 717], [550, 600], [550, 636], [550, 725], [550, 762], [586, 672], [586, 690], [622, 672], [622, 690], [660, 672], [660, 690], [586, 762], [622, 762], [660, 762], [206, 743], [222, 618], [222, 636], [550, 471], [130, 779], [130, 798], [130, 908], [130, 925], [261, 870], [315, 817], [170, 833], [188, 833], [170, 925], [188, 925]];
document.getElementById('vias').innerHTML = vias.map(([x, y]) => `<circle cx="${x}" cy="${y}" r="5"/>`).join('');

// ---- worksheet ----
let html = '';
function cell(cls, r, c, text, rs = 1, cs = 1) {
  html += `<div class="${cls}" style="grid-area:${r}/${c}/span ${rs}/span ${cs}"><span>${text || ''}</span></div>`;
}
// half-width runs get their own fixed-pitch face
function latin(s) {
  return s.replace(/<[^>]+>|[\x21-\x3b\x3d\x3f-\x7e“”]+(?: [\x21-\x3b\x3d\x3f-\x7e“”]+)*/g, m => m[0] === '<' ? m : `<span class="lat">${m}</span>`);
}
cell('hd', 1, 1, '');
'ABCDEFGHIJKLMNO'.split('').forEach((l, i) => cell('hd' + (i >= 2 && i <= 8 ? ' sel' : ''), 1, i + 2, l));
for (let r = 4; r <= 20; r++) {
  cell('rh' + (r === 15 ? ' sel' : ''), r - 2, 1, r < 20 ? r : '');
  cell('kk', r - 2, 12, '');
}
const side = '待确认<br>光绘时<br>一起确<br>认问题';
[2, 13].forEach(c => {
  cell('c cat blue', 2, c, side, 3);
  [1, 2, 3].forEach(n => cell('c n', n + 1, c + 1, n));
  cell('c cat', 5, c, '工艺流程<br>指示', 1, 2);
  cell('c cat cam', 6, c, 'CAM<br>指示', 13);
});
cell('c t note', 2, 4, latin('光绘确认（需提供PDF格式的拼版图纸并标注相关尺寸）'), 1, 5);
cell('c', 2, 9, '', 1, 2);
[3, 4].forEach(r => { cell('c', r, 4, '', 1, 5); cell('c', r, 9, '', 1, 2); });
cell('c', 5, 4, '', 1, 7);
[2, 3, 4, 5].forEach(r => { cell('c', r, 11, ''); cell('c', r, 15, '', 1, 2); });

const items = [
  '外层完成铜厚最小35um',
  '阻焊开窗与焊盘等大的只允许加大单边3mil，其他阻焊开窗在满足能力的情况下不允许再加大\n（正常补偿除外）',
  '此板不做包覆铜',
  '过孔工艺：搭在贴片层贴片焊盘上的过孔按非导电树脂塞孔电镀填平，平整度按IPC 3标准。其他\n过孔按文件制作，均不塞孔，客户接受油墨入孔，孔口发白，阻焊脱落和药水残留的品质问题。',
  '删除内层孤立焊盘',
  '允许加泪滴',
  '不允许阻焊上开窗焊盘和字符上焊盘',
  '若有需要，允许铺铜，但是铺铜不允许造成网络问题。铺铜距离板边最小间距100mil，<b>距离反光\n点最小间距200mil，距离NPTH孔最小间距200mil，距离其余图形最小间距100mil；铺铜的位置\n不允许开窗，需按盖油制作</b>',
  '贴片间距不足，允许阻焊上开窗焊盘单边最大1mil。若按此前提条件下控制还是无法保证阻焊\n桥，则允许削一点贴片焊盘',
  '在底层线线路层加我司全套标记，同时需加“lead-free/rohs compatible IT-180A”',
  '在底层字符层附图箭头所指出的字符串后面加上版本号，即“REV B”',
  '附图此类过孔孔径公差按（+0.076/-孔径大小）mm控制',
  '按附图拼板，工艺边大小0.4inch，包括铣槽大小，铣槽大小0.07inch。桥连（不加邮票孔）、\n定位孔和反光点要求按附图。桥连不允许加在器件位置。'
];
const links = { 11: "图1(fig1)'", 12: "图6(fig6)'", 13: "图7(fig7)'" };
const right = { 10: '在底层字符层加我司', 13: '按附图拼板，工艺边\n孔）、定位孔和反光\n500mil范围内。工艺\n个直径为125mil的' };
items.forEach((t, i) => {
  const n = i + 1, r = n + 5;
  const num = 'c n bold' + (n === 10 ? ' red' : '');
  cell(num, r, 3, n);
  cell(num, r, 14, n);
  cell('c t red' + (n === 8 ? ' cell15' : ''), r, 4, latin(t), 1, 7);
  cell('c link' + (n === 13 ? ' new' : ''), r, 11, links[n]);
  cell('c t right' + (n === 10 ? ' red' : '') + (n === 13 ? ' low' : ''), r, 15, latin(right[n] || ''), 1, 2);
});
document.getElementById('sheet').innerHTML = html;

document.getElementById('names').innerHTML = '<span class="act">指示</span>' +
  [1, 2, 3, 4, 5, 6, 7, 8].map(n => `<span>图${n}(fig${n})</span>`).join('') +
  ['Sheet10', 'Sheet11', 'Sheet12'].map(n => `<span class="sh">${n}</span>`).join('') + '<span class="new"></span>';

// ---- taskbar ----
const tasks = [
  ['钉钉', '#1b9cf2', ''], ['Administ', '#2b50c8', 'page'], ['EDS工程', '#1f9a4d', ''], ['Foxmail', '#d8352a', 'disc'],
  ['兴森快捷', '#e8b84a', 'disc'], ['计算器', '#5aa9c8', ''], ['制作规范', '#7fc4e8', 'page'], ['Genesis', '#178a7c', 'disc'],
  ['Engineer', '', 'win'], ['Progress', '', 'win'], ['Graphic', '', 'win'], ['6v0060', '', 'win'],
  ['6V0060', '#3f9a4a', 'doc'], ['6V0060', '#3f9a4a', 'doc', 1], ['Q16V00', '#3f9a4a', 'doc'], ['V006-71', '#3a62b8', 'doc'], ['CAM-Gu', '#178a7c', 'disc']
];
document.getElementById('taskbar').innerHTML =
  '<div class="start"><svg width="17" height="18" viewBox="0 0 17 18" fill="#fff"><path d="M0 2l7-1v8H0zM8 1l9-1v9H8z"/></svg></div>' +
  tasks.map(([t, c, k, a]) => `<div class="task${a ? ' act' : ''}"><i class="${k}"${c ? ` style="background-color:${c};border-left-color:${k === 'doc' ? c : ''}"` : ''}></i><span>${t}</span></div>`).join('') +
  '<div class="tray"><span class="up">^</span><span class="ex">✕</span><span class="fox"></span><span class="ime">英</span><span>囲</span><span class="time">14:49</span><span class="note"></span></div>';
```
